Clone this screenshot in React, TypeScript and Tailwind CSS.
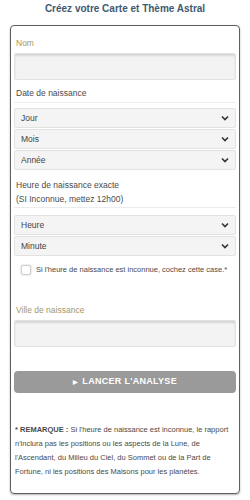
import { useState } from 'react';

function Chevron() {
  return (
    <svg width="8" height="6" viewBox="0 0 8 6" className="shrink-0">
      <path d="M1 1.5 L4 4.5 L7 1.5" fill="none" stroke="#333" strokeWidth="1.6" />
    </svg>
  );
}

function SelectBox({ label }: { label: string }) {
  return (
    <div className="flex h-[20px] items-center justify-between rounded-[2px] border border-[#e2e2e2] bg-[#f4f4f4] pl-[6px] pr-[6px] text-[8.5px] text-[#444]">
      <span>{label}</span>
      <Chevron />
    </div>
  );
}

function TextBox() {
  return (
    <div className="h-[27px] rounded-[2px] border border-[#e2e2e2] bg-[#f3f3f3] shadow-[inset_0_2px_2px_rgba(0,0,0,0.12)]" />
  );
}

export default function App() {
  const [unknown, setUnknown] = useState(false);

  return (
    <div
      className="w-[250px] bg-white pb-2"
      style={{ fontFamily: '"Liberation Sans", Arial, sans-serif' }}
    >
      <h1 className="pt-[2px] text-center text-[10px] font-bold leading-[13px] text-[#3f5a70]">
        Créez votre Carte et Thème Astral
      </h1>

      <div className="mx-[10px] mt-[10px] rounded-[4px] border border-[#5a5f62] px-[3px] pb-[14px] pt-[11px] shadow-[0_1px_2px_rgba(0,0,0,0.3)]">
        {/* Nom */}
        <label className="block px-[2px] text-[8.5px] leading-[12px] text-[#a3986a]">Nom</label>
        <div className="mt-[4px]">
          <TextBox />
        </div>

        {/* Date */}
        <div className="mt-[7px] border-b border-[#ececec] px-[2px] pb-[3px] text-[8.5px] leading-[12px] text-[#4a4a4a]">
          Date de naissance
        </div>
        <div className="mt-[5px] flex flex-col gap-[1px]">
          <SelectBox label="Jour" />
          <SelectBox label="Mois" />
          <SelectBox label="Année" />
        </div>

        {/* Heure */}
        <div className="mt-[8px] border-b border-[#ececec] px-[2px] pb-[1px] text-[8.5px] leading-[14px] text-[#4a4a4a]">
          <div>Heure de naissance exacte</div>
          <div>(SI Inconnue, mettez 12h00)</div>
        </div>
        <div className="mt-[7px] flex flex-col gap-[1px]">
          <SelectBox label="Heure" />
          <SelectBox label="Minute" />
        </div>

        <label className="mt-[8px] flex items-center gap-[5px] pl-[7px] text-[7.5px] leading-[12px] text-[#4a4a4a]">
          <input
            type="checkbox"
            checked={unknown}
            onChange={(e) => setUnknown(e.target.checked)}
            className="h-[10px] w-[10px] shrink-0 appearance-none rounded-[2px] border border-[#cfcfcf] bg-white shadow-[0_0_2px_rgba(0,0,0,0.25)]"
          />
          <span className="whitespace-nowrap">Si l'heure de naissance est inconnue, cochez cette case.*</span>
        </label>

        {/* Ville */}
        <label className="mt-[28px] block px-[2px] text-[8.5px] leading-[12px] text-[#a3986a]">
          Ville de naissance
        </label>
        <div className="mt-[4px]">
          <TextBox />
        </div>

        <button
          type="button"
          className="mt-[24px] flex h-[22px] w-full items-center justify-center gap-[4px] rounded-[4px] bg-[#9a9a9a] text-[9px] font-bold tracking-[0.3px] text-white"
        >
          <span className="text-[6px]">▶</span>
          LANCER L'ANALYSE
        </button>

        <p className="mt-[30px] px-[1px] text-[7.5px] leading-[14px] text-[#4a4a4a]">
          <b>* REMARQUE :</b> Si l'heure de naissance est inconnue, le rapport n'inclura pas les
          positions ou les aspects de la Lune, de l'Ascendant, du Milieu du Ciel, du Sommet ou de
          la Part de Fortune, ni les positions des Maisons pour les planètes.
        </p>
      </div>
    </div>
  );
}
